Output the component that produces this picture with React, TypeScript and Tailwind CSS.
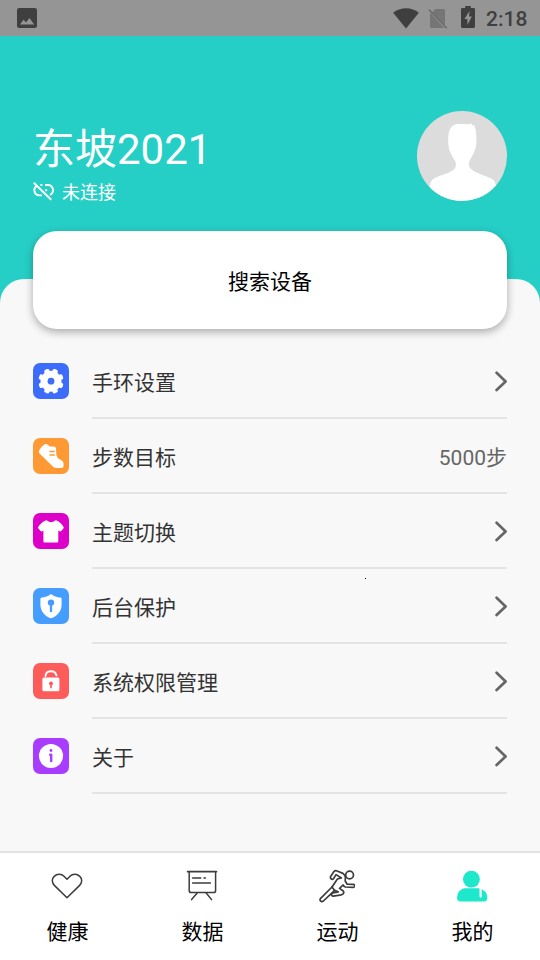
import React from 'react';

type IconProps = { className?: string };

const ImageIcon: React.FC<IconProps> = ({ className }) => (
  <svg viewBox="0 0 20 20" className={className}>
    <rect width="20" height="20" rx="2.2" fill="#3f3f3f" />
    <path d="M3 16.4L6.6 11.8L9 14.6L12.4 10L17.2 16.4Z" fill="#959595" />
  </svg>
);

const WifiIcon: React.FC<IconProps> = ({ className }) => (
  <svg viewBox="0 0 26 21" className={className}>
    <path d="M13 20.6L0.2 4.8C7 -1.2 19 -1.2 25.8 4.8Z" fill="#3f3f3f" />
  </svg>
);

const NoSimIcon: React.FC<IconProps> = ({ className }) => (
  <svg viewBox="0 0 20 21" className={className}>
    <path d="M7.4 1H15.4Q17 1 17 2.6V17.2L4.2 4.2Z" fill="#757575" />
    <path d="M2 4.6L16.2 20H3.6Q2 20 2 18.4Z" fill="#757575" />
    <path d="M0.8 1.4L18.8 20.2" stroke="#6a6a6a" strokeWidth="1.5" />
  </svg>
);

const BatteryIcon: React.FC<IconProps> = ({ className }) => (
  <svg viewBox="0 0 14 22" className={className}>
    <path d="M4.2 0H9.8V2H12.6Q14 2 14 3.4V20.6Q14 22 12.6 22H1.4Q0 22 0 20.6V3.4Q0 2 1.4 2H4.2Z" fill="#3f3f3f" />
    <path d="M8.6 5L3.4 13H6.4V19L10.8 10.6H8Z" fill="#959595" />
  </svg>
);

const UnlinkIcon: React.FC<IconProps> = ({ className }) => (
  <svg viewBox="0 0 22 19" fill="none" stroke="white" strokeWidth="1.9" className={className}>
    <path d="M4.2 3.6A5.2 5.2 0 0 0 6.2 13.4H9" />
    <path d="M12 3H14.8A5.2 5.2 0 0 1 17 12.9" />
    <path d="M7.4 3H9.4" />
    <path d="M12 8.2H14.2" />
    <path d="M0.8 0.8L18.2 17.8" />
  </svg>
);

const Avatar: React.FC<IconProps> = ({ className }) => (
  <svg viewBox="0 0 90 90" className={className}>
    <path
      d="M37 14C40 12.6 42 13.2 45 13C48 12.6 49 13.8 52 13.2L54.6 12.6L55.4 14.2L57 13.8C58.6 17 59.6 22 59.4 30C59.4 38 56 44 52.6 49.4C51.2 52 52 56 54 58C59 63 71 65 76 68.6C78.4 70.6 79 74 79 77V90H12.6V78C12.6 74 13.4 70 17 67.6C24 63.4 33 62.6 37.4 58C39.4 55.6 39.4 52 37.8 49.4C33.6 43 31 38 31.2 29C31.2 20 33 16 37 14Z"
      fill="white"
    />
  </svg>
);

const GearIcon = () => (
  <svg viewBox="0 0 36 36" className="h-9 w-9">
    <g transform="translate(18 18.2)" fill="white">
      <circle r="10.5" />
      {[22.5, 67.5, 112.5, 157.5, 202.5, 247.5, 292.5, 337.5].map((angle) => (
        <rect key={angle} x="-2.7" y="-12.7" width="5.4" height="6" rx="1.8" transform={`rotate(${angle})`} />
      ))}
      <circle r="3.4" fill="#3d6cfb" />
    </g>
  </svg>
);

const ShoeIcon = () => (
  <svg viewBox="0 0 36 36" className="h-9 w-9">
    <path
      d="M11.8 6.2Q13.2 5.4 14.6 6.6L16.6 8.6L21 8.5Q22.8 8.6 23 10.4L23.4 17Q23.8 19.2 25.4 20.4L29.4 23Q30.5 23.8 30.5 25.2V28.6Q30.3 30 28.8 30.1H23.2Q21.6 30 20.4 29L6.8 15.8Q5.4 14.2 6.1 12.4Q8 8.4 11.8 6.2Z"
      fill="white"
    />
    <path d="M17 13.5H21.2M17 17H21.4" stroke="#ff9933" strokeWidth="1.3" strokeLinecap="round" />
  </svg>
);

const ShirtIcon = () => (
  <svg viewBox="0 0 36 36" className="h-9 w-9">
    <path
      d="M12.6 7.4Q13.4 7 14 7.6Q18 10.8 22.2 7.6Q22.8 7 23.6 7.4Q27.6 9 30.6 14Q31 14.8 30.4 15.4L28.2 18Q27.4 18.8 26.6 18.2L25.3 17.4V28.2Q25.3 29.4 24.1 29.4H11.6Q10.4 29.4 10.4 28.2V17.4L9.2 18.2Q8.4 18.8 7.6 18L5.4 15.4Q4.8 14.8 5.2 14Q8.4 9 12.6 7.4Z"
      fill="white"
    />
  </svg>
);

const ShieldIcon = () => (
  <svg viewBox="0 0 36 36" className="h-9 w-9">
    <path
      d="M18 5.9C20.8 8 24 9.2 27.4 9.4Q28.6 9.6 28.6 10.8V16.4C28.6 23 24.4 28 18 30.3C11.6 28 7.4 23 7.4 16.4V10.8Q7.4 9.6 8.6 9.4C12 9.2 15.2 8 18 5.9Z"
      fill="white"
    />
    <circle cx="18" cy="14.6" r="3.2" fill="#449dff" />
    <path d="M18 15V23.2" stroke="#449dff" strokeWidth="2.3" strokeLinecap="round" />
  </svg>
);

const LockIcon = () => (
  <svg viewBox="0 0 36 36" className="h-9 w-9">
    <rect x="9.4" y="14.5" width="17" height="13.7" rx="1.5" fill="white" />
    <path d="M12.5 13C13 7 22 6.6 23.5 12.4" fill="none" stroke="white" strokeWidth="1.9" strokeLinecap="round" />
    <circle cx="18" cy="20.4" r="2" fill="#fe5b5b" />
    <path d="M18 21V24.6" stroke="#fe5b5b" strokeWidth="1.7" strokeLinecap="round" />
  </svg>
);

const InfoIcon = () => (
  <svg viewBox="0 0 36 36" className="h-9 w-9">
    <circle cx="18" cy="18" r="12.1" fill="white" />
    <circle cx="18" cy="12.5" r="1.4" fill="#a83cff" />
    <path d="M17.2 16.7H18.2V23.1" fill="none" stroke="#a83cff" strokeWidth="2.4" strokeLinecap="round" strokeLinejoin="round" />
  </svg>
);

const Chevron = () => (
  <svg viewBox="0 0 14 22" className="h-[22px] w-3.5" fill="none" stroke="#666666" strokeWidth="2.7" strokeLinecap="round" strokeLinejoin="round">
    <path d="M3.6 2.8L12.6 11.4L3.6 20" />
  </svg>
);

const HeartIcon = () => (
  <svg viewBox="0 0 36 36" className="h-9 w-9" fill="none" stroke="#3c3c3c" strokeWidth="1.5" strokeLinejoin="round">
    <path d="M18 29.8L5.6 17.6C2.6 14.6 2.6 10.8 5.2 8.4C8 5.6 12.4 5.6 15 8.2L18 11.3L21 8.2C23.6 5.6 28 5.6 30.8 8.4C33.4 10.8 33.4 14.6 30.4 17.6Z" />
  </svg>
);

const BoardIcon = () => (
  <svg viewBox="0 0 36 36" className="h-9 w-9" fill="none" stroke="#3c3c3c" strokeWidth="1.5" strokeLinecap="round">
    <path d="M3.6 3.6H32.4" strokeWidth="1.7" />
    <path d="M5.2 3.8V22.4Q5.2 24.6 7.4 24.6H29.6Q31.6 24.6 31.6 22.4V3.8" />
    <path d="M8.6 10H16.8M20 10H21.4M8.6 15H26.4" />
    <path d="M13.2 25L7.6 31.6M22.2 25L27.6 31.6" />
  </svg>
);

const RunnerIcon = () => (
  <svg viewBox="0 0 36 36" className="h-9 w-9" fill="none" stroke="#3c3c3c" strokeWidth="1.7" strokeLinejoin="round" strokeLinecap="round">
    <circle cx="30.6" cy="7" r="3.9" />
    <path d="M11.8 8.2L15 3.6Q15.8 2.3 17.4 2.8L24 5.4Q26.4 6.8 26.4 9.6L26.2 13L28.2 16.2L34.4 16.4Q36 16.8 35.6 18.2Q35.2 19.2 34 19.3L26.4 19Q24.8 18.6 24 17L20.6 20.4L24.2 23Q25.4 24.6 24 26L22.4 26.8L14.2 28.2Q12.4 28 12.6 26.4Q12.8 25.4 14 25L19.2 23.8L15.6 22.4L4.4 33Q2.8 34.2 1.4 32.8Q0.6 31.8 1.4 30.6L13 19L18.4 11L22.4 10L17 6.6L14.6 10.6Q13.4 11.8 12.2 11Q11 9.8 11.8 8.2Z" />
    <path d="M13 19L15.6 22.4" />
  </svg>
);

const UserIcon = () => (
  <svg viewBox="0 0 36 36" className="h-9 w-9" fill="#1ee8cc">
    <circle cx="17.4" cy="11.2" r="8.4" />
    <path d="M10 20.2H25Q33.4 22.4 33.4 29.8Q33.4 33.4 30 33.4H6.6Q3 33.4 3 29.8Q3.2 22.4 10 20.2Z" />
    <path d="M26.6 20V28.6" stroke="white" strokeWidth="2.2" strokeLinecap="round" />
  </svg>
);

const menuItems = [
  { label: '手环设置', color: 'bg-[#3d6cfb]', Icon: GearIcon },
  { label: '步数目标', color: 'bg-[#ff9933]', Icon: ShoeIcon, value: '5000步' },
  { label: '主题切换', color: 'bg-[#dd00c8]', Icon: ShirtIcon },
  { label: '后台保护', color: 'bg-[#449dff]', Icon: ShieldIcon },
  { label: '系统权限管理', color: 'bg-[#fe5b5b]', Icon: LockIcon },
  { label: '关于', color: 'bg-[#a83cff]', Icon: InfoIcon },
];

const tabs = [
  { label: '健康', Icon: HeartIcon },
  { label: '数据', Icon: BoardIcon },
  { label: '运动', Icon: RunnerIcon },
  { label: '我的', Icon: UserIcon },
];

const StatusBar = () => (
  <div className="flex h-9 shrink-0 items-center justify-between bg-[#959595] pl-[17px] pr-3">
    <ImageIcon className="h-5 w-5" />
    <div className="flex items-center">
      <WifiIcon className="h-[21px] w-[26px]" />
      <NoSimIcon className="ml-[9px] h-[21px] w-5" />
      <BatteryIcon className="mb-0.5 ml-[13px] h-[22px] w-3.5" />
      <span className="ml-[11px] w-[42px] pt-0.5 text-[21px] font-medium leading-none text-[#3f3f3f]">2:18</span>
    </div>
  </div>
);

const App: React.FC = () => {
  return (
    <div className="relative flex h-[960px] w-[540px] flex-col overflow-hidden bg-[#26cfc6] font-[Roboto,'Noto_Sans_CJK_SC',sans-serif]">
      <StatusBar />

      <header className="flex h-[243px] shrink-0 items-start justify-between px-[33px] pt-[75px]">
        <div className="pt-3.5">
          <h1 className="text-[42px] leading-[50px] text-white">东坡2021</h1>
          <div className="mt-1.5 flex items-center gap-[7px]">
            <UnlinkIcon className="-mt-1 h-[19px] w-[22px]" />
            <span className="text-lg leading-6 text-white">未连接</span>
          </div>
        </div>
        <div className="h-[90px] w-[90px] overflow-hidden rounded-full bg-[#dcdcdc]">
          <Avatar className="h-full w-full" />
        </div>
      </header>

      <main className="flex-1 rounded-t-3xl bg-[#f8f8f8] px-[33px]">
        <button className="-mt-12 flex h-[98px] w-full items-center justify-center rounded-3xl bg-white pt-[5px] text-[21px] text-black shadow-[0_3px_8px_rgba(0,0,0,0.32)]">
          搜索设备
        </button>

        <ul className="mt-[15px]">
          {menuItems.map(({ label, color, Icon, value }) => (
            <li key={label} className="flex h-[75px] items-center gap-[23px]">
              <div className={`mb-0.5 h-9 w-9 overflow-hidden rounded-[7px] ${color}`}>
                <Icon />
              </div>
              <div className="flex h-full flex-1 items-center justify-between border-b-2 border-[#e4e4e4]">
                <span className="pt-[7px] text-[21px] text-[#333333]">{label}</span>
                {value ? <span className="pt-[7px] text-[21px] text-[#666666]">{value}</span> : <Chevron />}
              </div>
            </li>
          ))}
        </ul>
      </main>

      <nav className="flex h-[109px] shrink-0 border-t-2 border-[#e2e2e2] bg-white">
        {tabs.map(({ label, Icon }) => (
          <div key={label} className="flex flex-1 flex-col items-center pt-[15px]">
            <div className="-translate-x-px">
              <Icon />
            </div>
            <span className="mt-3 text-[21px] leading-8 text-black">{label}</span>
          </div>
        ))}
      </nav>

      <span className="absolute left-[365px] top-[578px] h-px w-px bg-black" />
    </div>
  );
};

export default App;
